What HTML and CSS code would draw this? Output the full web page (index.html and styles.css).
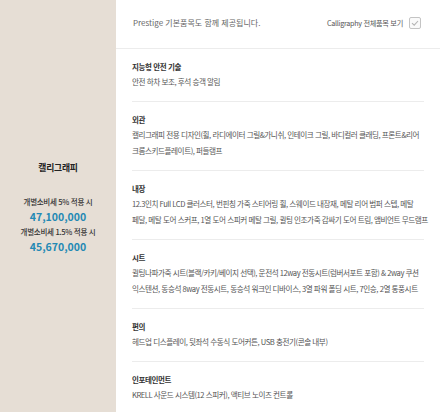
FILE: index.html
```html
<!DOCTYPE html>
<html lang="ko">
<head>
<meta charset="utf-8">
<link rel="stylesheet" href="styles.css">
</head>
<body>
<div class="page">
  <aside class="side">
    <div class="trim">캘리그래피</div>
    <div class="prices">
      <div class="tax">개별소비세 5% 적용 시</div>
      <div class="price">47,100,000</div>
      <div class="tax">개별소비세 1.5% 적용 시</div>
      <div class="price">45,670,000</div>
    </div>
  </aside>
  <main class="main">
    <header class="head">
      <p class="note">Prestige 기본품목도 함께 제공됩니다.</p>
      <label class="toggle">Calligraphy 전체품목 보기
        <span class="box"><svg width="10" height="10" viewBox="0 0 10 10"><path d="M2 5.2 L4.2 7.2 L8 3" fill="none" stroke="#b5b5b5" stroke-width="1.1"/></svg></span>
      </label>
    </header>
    <section class="group">
      <h3>지능형 안전 기술</h3>
      <p>안전 하차 보조, 후석 승객 알림</p>
    </section>
    <section class="group">
      <h3>외관</h3>
      <p>캘리그래피 전용 디자인(휠, 라디에이터 그릴&amp;가니쉬, 인테이크 그릴, 바디컬러 클래딩, 프론트&amp;리어<br>크롬스키드플레이트), 퍼들램프</p>
    </section>
    <section class="group">
      <h3>내장</h3>
      <p>12.3인치 Full LCD 클러스터, 번핀칭 가죽 스티어링 휠, 스웨이드 내장재, 메탈 리어 범퍼 스텝, 메탈<br>페달, 메탈 도어 스커프, 1열 도어 스피커 메탈 그릴, 퀼팅 인조가죽 감싸기 도어 트림, 앰비언트 무드램프</p>
    </section>
    <section class="group">
      <h3>시트</h3>
      <p>퀼팅나파가죽 시트(블랙/카키/베이지 선택), 운전석 12way 전동시트(럼버서포트 포함) &amp; 2way 쿠션<br>익스텐션, 동승석 8way 전동시트, 동승석 워크인 디바이스, 3열 파워 폴딩 시트, 7인승, 2열 통풍시트</p>
    </section>
    <section class="group">
      <h3>편의</h3>
      <p>헤드업 디스플레이, 뒷좌석 수동식 도어커튼, USB 충전기(콘솔 내부)</p>
    </section>
    <section class="group">
      <h3>인포테인먼트</h3>
      <p>KRELL 사운드 시스템(12 스피커), 액티브 노이즈 컨트롤</p>
    </section>
  </main>
</div>
</body>
</html>
```
FILE: styles.css
```css
* { box-sizing: border-box; margin: 0; padding: 0; }
html, body { width: 440px; height: 412px; overflow: hidden; background: #fff; }
body { font-family: "Noto Sans CJK KR", "Noto Sans", sans-serif; color: #444; }
.page { display: flex; height: 412px; }
.side {
  width: 116px; flex: none; background: #e6ded5;
  display: flex; flex-direction: column; align-items: center; justify-content: center;
  gap: 20px; padding-top: 2px;
}
.trim { font-size: 8.8px; font-weight: 700; color: #222; line-height: 14px; letter-spacing: -0.2px; }
.prices { display: flex; flex-direction: column; align-items: center; }
.tax { font-size: 7.5px; font-weight: 500; color: #333; line-height: 14px; letter-spacing: -0.3px; }
.price { font-size: 10.5px; font-weight: 700; color: #2389b4; line-height: 15px; }
.price + .tax { margin-top: 1px; }
.main { flex: 1; min-width: 0; padding: 0 16px; }
.head {
  height: 49px; display: flex; align-items: center; justify-content: space-between;
  margin: 0 -16px; padding: 0 19px 0 17px; border-bottom: 1px solid #ececec;
  font-size: 8px; color: #666;
}
.note { padding-bottom: 4px; }
.toggle { display: flex; align-items: center; gap: 6px; padding-bottom: 3px; font-size: 7.2px; letter-spacing: -0.3px; color: #555; }
.box {
  width: 12px; height: 12px; border: 1px solid #c4c4c4; border-radius: 2px;
  display: flex; align-items: center; justify-content: center; background: #fafafa;
}
.group { padding: 11px 0; border-bottom: 1px solid #ececec; }
.group:last-child { border-bottom: none; }
.group h3 { font-size: 7.5px; font-weight: 700; color: #333; line-height: 14px; letter-spacing: -0.4px; }
.group p { font-size: 7.6px; line-height: 16px; color: #555; letter-spacing: -0.47px; white-space: nowrap; }
```
